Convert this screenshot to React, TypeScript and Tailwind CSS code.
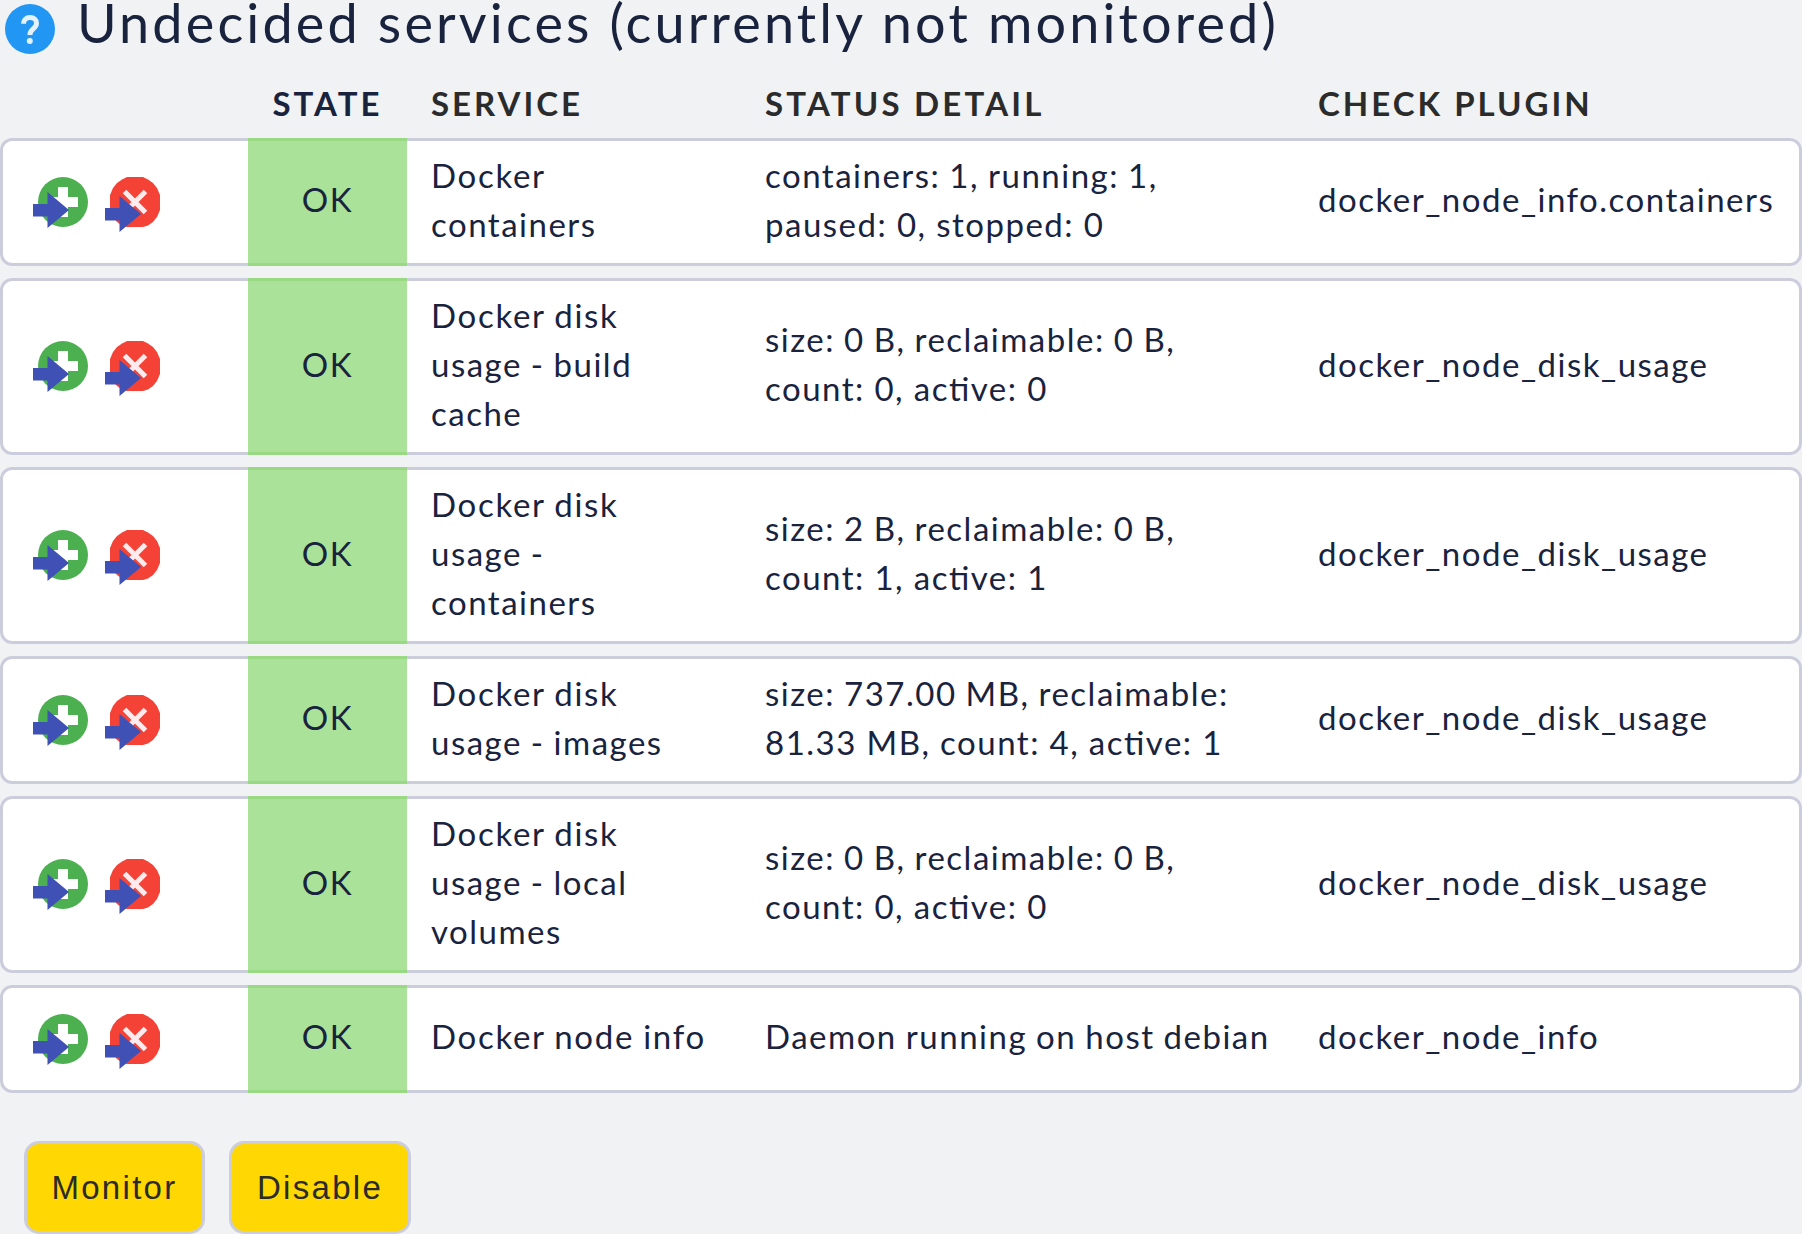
import React from 'react';

type Service = { height: string; iconTop: string; service: string[]; detail: string[]; plugin: string };

const TALL = { height: 'h-[177px]', iconTop: 'pt-[63px]' };
const MEDIUM = { height: 'h-[128px]', iconTop: 'pt-[39px]' };
const SHORT = { height: 'h-[108px]', iconTop: 'pt-[29px]' };

const SERVICES: Service[] = [
  { ...MEDIUM, service: ['Docker', 'containers'], detail: ['containers: 1, running: 1,', 'paused: 0, stopped: 0'], plugin: 'docker_node_info.containers' },
  { ...TALL, service: ['Docker disk', 'usage - build', 'cache'], detail: ['size: 0 B, reclaimable: 0 B,', 'count: 0, active: 0'], plugin: 'docker_node_disk_usage' },
  { ...TALL, service: ['Docker disk', 'usage -', 'containers'], detail: ['size: 2 B, reclaimable: 0 B,', 'count: 1, active: 1'], plugin: 'docker_node_disk_usage' },
  { ...MEDIUM, service: ['Docker disk', 'usage - images'], detail: ['size: 737.00 MB, reclaimable:', '81.33 MB, count: 4, active: 1'], plugin: 'docker_node_disk_usage' },
  { ...TALL, service: ['Docker disk', 'usage - local', 'volumes'], detail: ['size: 0 B, reclaimable: 0 B,', 'count: 0, active: 0'], plugin: 'docker_node_disk_usage' },
  { ...SHORT, service: ['Docker node info'], detail: ['Daemon running on host debian'], plugin: 'docker_node_info' },
];

const COLUMNS = 'grid grid-cols-[248px_159px_334px_553px_1fr]';

function MonitorIcon() {
  return (
    <svg className="block h-[56px] w-[56px]" viewBox="0 0 56 56" aria-hidden="true">
      <circle cx="30" cy="25" r="25" fill="#4caf50" />
      <path d="M25 10h10v10h10v10H35v10H25V30H15V20h10z" fill="#fff" />
      <path d="M0 27h14.500V15L36 33 14.500 51V39.500H0z" fill="#3f51b5" />
    </svg>
  );
}

function DisableIcon() {
  return (
    <svg className="block h-[56px] w-[56px]" viewBox="0 0 56 56" aria-hidden="true">
      <path d="M22 0h16l5 2.500 5 3.500 4 5 3 7v15l-3 7-4 5-5 3.500-5 1.500H22l-5-1.500-5-3.500-4-5-3-7V18l3-7 4-5 5-3.500z" fill="#f44336" />
      <path d="M19.500 14.500l21 21M40.500 14.500l-21 21" stroke="#ffebee" strokeWidth="5" fill="none" />
      <path d="M0 31h14.500V19L36 37 14.500 55V43.500H0z" fill="#3f51b5" />
    </svg>
  );
}

function ServiceName({ lines }: { lines: string[] }) {
  return (
    <div className="flex flex-col whitespace-nowrap pb-[5px] pl-6">
      {lines.map((line, i) => (
        <span key={i} className={i === 0 ? 'tracking-[1.7px] [word-spacing:-1px]' : '[word-spacing:-1px]'}>{line}</span>
      ))}
    </div>
  );
}

function Detail({ lines }: { lines: string[] }) {
  return (
    <div className="flex flex-col whitespace-nowrap pb-[5px] pl-6">
      {lines.map((line, i) => (
        <span key={i} className={i === 0 ? '[word-spacing:-0.9px]' : '[word-spacing:-0.3px]'}>{line}</span>
      ))}
    </div>
  );
}

function Row({ item }: { item: Service }) {
  return (
    <div className={`${COLUMNS} ${item.height} relative items-center rounded-[12px] bg-white`}>
      <div className="pointer-events-none absolute inset-0 rounded-[12px] border-[3px] border-[#cccddc]" />
      <div className={`${item.iconTop} flex gap-4 self-start pl-[33px]`}>
        <MonitorIcon />
        <DisableIcon />
      </div>
      <div className="relative flex h-full items-center justify-center border-y-[3px] border-[#9ad984] bg-[#a9e298] pb-[5px]">OK</div>
      <ServiceName lines={item.service} />
      <Detail lines={item.detail} />
      <div className="whitespace-nowrap pb-[5px] pl-6">{item.plugin}</div>
    </div>
  );
}

function ActionButton({ label, width }: { label: string; width: string }) {
  return (
    <button className={`${width} h-[93px] rounded-[15px] border-[3px] border-[#cccddc] bg-[#ffd703] font-['Liberation_Sans',sans-serif] text-[33px] tracking-[2.3px] text-[#2b2b2b]`}>
      {label}
    </button>
  );
}

export default function App() {
  return (
    <main className="h-[1234px] w-[1802px] overflow-hidden bg-[#f0f2f4] font-['Lato',sans-serif] text-[33px] leading-[49px] tracking-[1.5px] text-[#19233e] [font-feature-settings:'liga'_1]">
      <header className="flex h-[76px] items-start">
        <svg className="ml-[5px] mt-[4px] h-[50px] w-[50px] shrink-0" viewBox="0 0 50 50" aria-hidden="true">
          <circle cx="25" cy="25" r="25" fill="#2196f3" />
          <path d="M18.500 19.800c0-3.800 2.500-6.200 6.500-6.200s6.500 2.200 6.500 5.800c0 5.200-6.600 5.400-6.600 11.600" stroke="#e3f2fd" strokeWidth="5" fill="none" />
          <circle cx="24.800" cy="37" r="3" fill="#e3f2fd" />
        </svg>
        <h1 className="ml-[22px] whitespace-nowrap text-[54px] leading-[46px] tracking-[3.15px]">Undecided services (currently not monitored)</h1>
      </header>
      <div className={`${COLUMNS} h-[62px] items-start pt-[3px] font-bold tracking-[3px] text-[#2b2b2b]`}>
        <span />
        <span className="text-center text-[#19233e]">STATE</span>
        <span className="pl-6">SERVICE</span>
        <span className="pl-6 tracking-[3.2px]">STATUS DETAIL</span>
        <span className="pl-6">CHECK PLUGIN</span>
      </div>
      <section className="flex flex-col gap-3">
        {SERVICES.map((item, i) => (
          <Row key={i} item={item} />
        ))}
      </section>
      <footer className="flex gap-6 pl-6 pt-12">
        <ActionButton label="Monitor" width="w-[181px]" />
        <ActionButton label="Disable" width="w-[182px]" />
      </footer>
    </main>
  );
}
